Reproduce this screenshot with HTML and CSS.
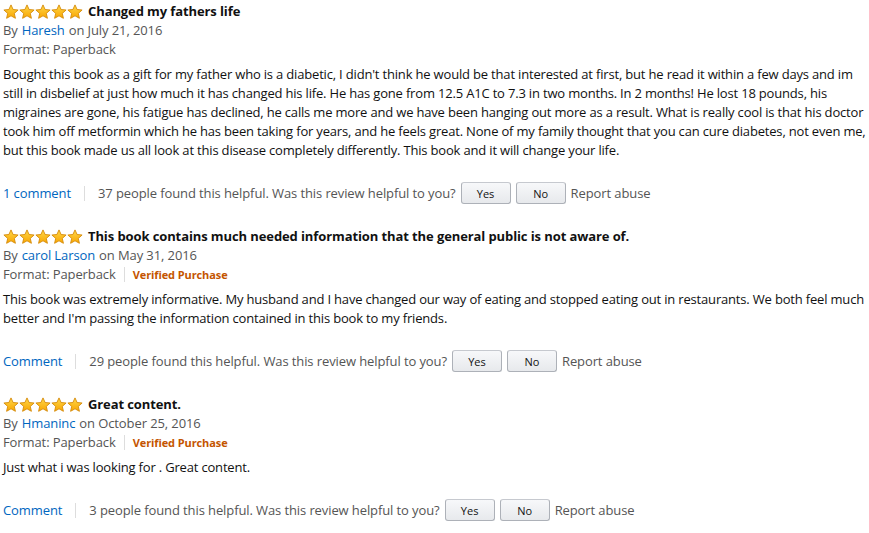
FILE: index.html
```html
<!DOCTYPE html>
<html lang="en">
<head>
    <meta charset="UTF-8">
    <title>Customer reviews</title>
    <link rel="stylesheet" href="styles.css">
</head>
<body>
    <svg width="0" height="0" class="defs">
        <defs>
            <linearGradient id="gold" x1="0" y1="0" x2="0" y2="1">
                <stop offset="0" stop-color="#ffd84a"/>
                <stop offset="1" stop-color="#f8a500"/>
            </linearGradient>
            <symbol id="star" viewBox="0 0 16 16">
                <path d="M8 .9l2.1 4.6 5 .5-3.8 3.4 1.1 4.9L8 11.8l-4.4 2.5 1.1-4.9L.9 6l5-.5z" fill="url(#gold)" stroke="#d58a08" stroke-width=".9" stroke-linejoin="round"/>
            </symbol>
        </defs>
    </svg>

    <div class="reviews">
        <div class="review">
            <div class="review_head">
                <span class="stars"><svg><use href="#star"/></svg><svg><use href="#star"/></svg><svg><use href="#star"/></svg><svg><use href="#star"/></svg><svg><use href="#star"/></svg></span>
                <span class="review_title">Changed my fathers life</span>
            </div>
            <div class="review_meta">By <a href="#" class="link">Haresh</a> on July 21, 2016</div>
            <div class="review_meta">Format: Paperback</div>
            <p class="review_text">Bought this book as a gift for my father who is a diabetic, I didn't think he would be that interested at first, but he read it within a few days and im still in disbelief at just how much it has changed his life. He has gone from 12.5 A1C to 7.3 in two months. In 2 months! He lost 18 pounds, his migraines are gone, his fatigue has declined, he calls me more and we have been hanging out more as a result. What is really cool is that his doctor took him off metformin which he has been taking for years, and he feels great. None of my family thought that you can cure diabetes, not even me, but this book made us all look at this disease completely differently. This book and it will change your life.</p>
            <div class="helpful">
                <a href="#" class="link">1 comment</a>
                <span class="sep"></span>
                <span>37 people found this helpful. Was this review helpful to you?</span>
                <button class="btn">Yes</button>
                <button class="btn">No</button>
                <span>Report abuse</span>
            </div>
        </div>

        <div class="review">
            <div class="review_head">
                <span class="stars"><svg><use href="#star"/></svg><svg><use href="#star"/></svg><svg><use href="#star"/></svg><svg><use href="#star"/></svg><svg><use href="#star"/></svg></span>
                <span class="review_title">This book contains much needed information that the general public is not aware of.</span>
            </div>
            <div class="review_meta">By <a href="#" class="link">carol Larson</a> on May 31, 2016</div>
            <div class="review_meta">Format: Paperback<span class="sep sep-small"></span><span class="verified">Verified Purchase</span></div>
            <p class="review_text">This book was extremely informative. My husband and I have changed our way of eating and stopped eating out in restaurants. We both feel much better and I'm passing the information contained in this book to my friends.</p>
            <div class="helpful">
                <a href="#" class="link">Comment</a>
                <span class="sep"></span>
                <span>29 people found this helpful. Was this review helpful to you?</span>
                <button class="btn">Yes</button>
                <button class="btn">No</button>
                <span>Report abuse</span>
            </div>
        </div>

        <div class="review">
            <div class="review_head">
                <span class="stars"><svg><use href="#star"/></svg><svg><use href="#star"/></svg><svg><use href="#star"/></svg><svg><use href="#star"/></svg><svg><use href="#star"/></svg></span>
                <span class="review_title">Great content.</span>
            </div>
            <div class="review_meta">By <a href="#" class="link">Hmaninc</a> on October 25, 2016</div>
            <div class="review_meta">Format: Paperback<span class="sep sep-small"></span><span class="verified">Verified Purchase</span></div>
            <p class="review_text">Just what i was looking for . Great content.</p>
            <div class="helpful">
                <a href="#" class="link">Comment</a>
                <span class="sep"></span>
                <span>3 people found this helpful. Was this review helpful to you?</span>
                <button class="btn">Yes</button>
                <button class="btn">No</button>
                <span>Report abuse</span>
            </div>
        </div>
    </div>
</body>
</html>
```

FILE: styles.css
```css
body {
    margin: 0;
    padding: 2px 0 0 3px;
    background: #fff;
    color: #111;
    font-family: "Open Sans", "Noto Sans", sans-serif;
    font-size: 13px;
    line-height: 19px;
    letter-spacing: -0.1px;
}
.defs {
    position: absolute;
}
.reviews {
    width: 866px;
}
.review {
    margin-bottom: 23px;
}
.review_head {
    display: flex;
    align-items: center;
    height: 19px;
}
.stars {
    display: flex;
    margin-right: 5px;
}
.stars svg {
    width: 16px;
    height: 16px;
}
.review_title {
    font-weight: bold;
}
.review_meta {
    color: #555;
    display: flex;
    align-items: center;
}
.link {
    color: #0066c0;
    text-decoration: none;
    margin: 0 4px;
}
.helpful .link {
    margin: 0;
}
.review_text {
    margin: 6px 0 0;
    letter-spacing: -0.18px;
}
.helpful {
    display: flex;
    align-items: center;
    height: 22px;
    margin-top: 22px;
    color: #555;
}
.sep {
    display: inline-block;
    width: 1px;
    height: 15px;
    background: #ddd;
    margin: 0 13px;
}
.sep-small {
    margin: 0 8px;
}
.verified {
    color: #c45500;
    font-weight: bold;
    font-size: 11px;
}
.btn {
    font-family: inherit;
    font-size: 11px;
    color: #111;
    width: 50px;
    height: 22px;
    margin-left: 5px;
    padding: 0;
    border: 1px solid #adb1b8;
    border-top-color: #c6c9cf;
    border-radius: 3px;
    background: linear-gradient(#f7f8fa, #e7e9ec);
}
.btn + span {
    margin-left: 5px;
}
```
